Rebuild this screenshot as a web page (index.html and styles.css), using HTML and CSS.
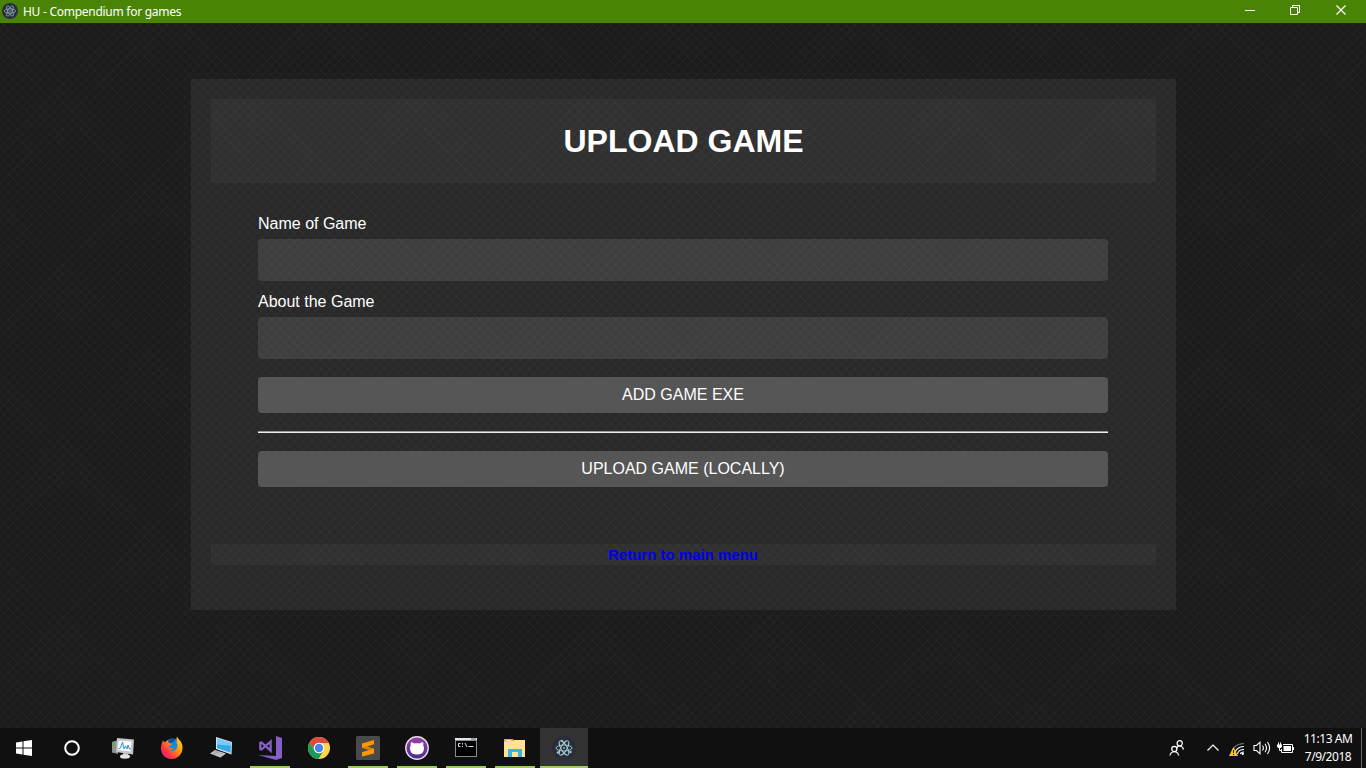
FILE: index.html
```html
<!DOCTYPE html>
<html lang="en">
<head>
<meta charset="utf-8">
<title>HU - Compendium for games</title>
<link rel="stylesheet" href="styles.css">
</head>
<body>
<header class="titlebar">
  <svg class="app-icon" viewBox="0 0 24 24"><circle cx="12" cy="12" r="12" fill="#2b2e3a"/><g fill="none" stroke="#a6cfda" stroke-width="1.1" opacity=".8"><ellipse cx="12" cy="12" rx="8.600" ry="3.300" transform="rotate(0 12 12)"/><ellipse cx="12" cy="12" rx="8.600" ry="3.300" transform="rotate(60 12 12)"/><ellipse cx="12" cy="12" rx="8.600" ry="3.300" transform="rotate(120 12 12)"/></g><circle cx="12" cy="12" r="1" fill="#a6cfda"/></svg>
  <span class="window-title">HU - Compendium for games</span>
  <div class="window-controls">
    <svg viewBox="0 0 46 23"><path d="M10 10.500h10" stroke="#fff"/></svg>
    <svg viewBox="0 0 46 23"><path d="M9.500 7.500h7v7h-7zM11.500 7.500v-2h7v7h-2" fill="none" stroke="#fff"/></svg>
    <svg viewBox="0 0 46 23"><path d="M9.500 5.500l9 9m0-9l-9 9" stroke="#fff" stroke-width="1.200"/></svg>
  </div>
</header>
<main class="stage">
  <section class="panel">
    <div class="panel-head"><h1>UPLOAD GAME</h1></div>
    <form class="form">
      <label for="name">Name of Game</label>
      <input id="name" type="text">
      <label for="about">About the Game</label>
      <input id="about" type="text">
      <button type="button">ADD GAME EXE</button>
      <hr>
      <button type="button">UPLOAD GAME (LOCALLY)</button>
    </form>
    <div class="panel-foot"><a href="#">Return to main menu</a></div>
  </section>
</main>
<footer class="taskbar">
  <div class="apps">
    <div class="app"><svg viewBox="0 0 24 24"><path fill="#fff" d="M4 6.400l6.500-.9v6H4zM11.500 5.300l8.500-1.200v7.400h-8.500zM4 12.500h6.500v6L4 17.600zM11.500 12.500H20v7.500l-8.500-1.300z"/></svg></div>
    <div class="app cortana"><svg viewBox="0 0 24 24"><circle cx="12" cy="12" r="6.800" fill="none" stroke="#fff" stroke-width="2"/></svg></div>
    <div class="app"><svg viewBox="0 0 24 24"><path fill="#8f9191" d="M1 6l6-2v14l-6-1.500z"/><path fill="#55b04a" d="M1 7h1.500v3H1z"/><path fill="#c4c6c6" d="M6 2l17 1.500-1 15L5 16z"/><path fill="#f6fbff" d="M7.500 4.500l13 1-.8 10-13-1.500z"/><path fill="none" stroke="#3391cf" stroke-width="1" d="M7.500 13l2-1 2-6 1.500 7 1.500-3 1.500 3 1-4 1.500 4h1.500"/><path fill="#b7b9b9" d="M12 17h5v3h-5z"/><ellipse cx="14" cy="20.500" rx="5" ry="2.200" fill="#e2e3e3"/></svg></div>
    <div class="app"><svg viewBox="0 0 24 24">
      <defs><linearGradient id="fx" x1="1" y1="0" x2="0" y2="1"><stop offset="0" stop-color="#ffe32b"/><stop offset=".4" stop-color="#ff980e"/><stop offset=".7" stop-color="#ff3647"/><stop offset="1" stop-color="#d31785"/></linearGradient></defs>
      <circle cx="12.500" cy="11" r="8.500" fill="#1689dd"/><path fill="url(#fx)" d="M3 4.500l2 2c1-1.500 2-2 3.500-2.500-.6 1.500-.3 2.500.5 3.300l3 .4c-.2 1.200-1.200 1.500-2.500 2.100-1 .6 0 2 1.200 2.200 1.300.1 2.300-.7 3.300-.2-1 2-3 2.500-5 1.800 2.500 2.800 8 1.200 8.400-3.500.2-2.300-.9-3.600-2.100-4.300 1 .1 1.600.5 2.200 1-.8-2-1.500-3.800-.5-6.300 1 2.500 3.900 4.100 5 7.500 2.300 8-3 15-10.500 15C4.500 23 1 17.700 1 12c0-3 1-5 2-7.500z"/><path fill="#174b9e" d="M8.500 3.500c2-1 5-1.500 7 .5l-2 2-4 1c-1-1-1.200-2-1-3.500z"/></svg></div>
    <div class="app"><svg viewBox="0 0 24 24"><path fill="#d7e5ee" d="M7 1l16 5-.5 12.500L7 13z"/><path fill="#36a9ee" d="M8 2.500l14 4.300-.5 10L8 12z"/><path fill="#72cdff" d="M8 2.500l14 4.300-.1 3L8 8.500z"/><path fill="#ccd0d2" d="M6 14l11 3.500-5.500 4L1 17.500z"/><path d="M5 15l9 3.200M3.500 16.500l9 3.200M9 15.500l-5 3" stroke="#85898b" stroke-width=".6"/></svg></div>
    <div class="app open"><svg viewBox="0 0 24 24"><path fill="#865fc5" d="M18 0l6 2v20l-6 2-18-5 18 1z"/><path fill="none" stroke="#865fc5" stroke-width="2.300" d="M2.300 6.800v6.400l1.200.3L12.600 5.500v9.200L3.500 6.500z"/></svg></div>
    <div class="app"><svg viewBox="0 0 24 24"><circle cx="12" cy="12" r="11" fill="#fdd44b"/><path fill="#dd4b3e" d="M2.500 6.500A11 11 0 0 1 21.700 7H12a5 5 0 0 0-4.500 7z"/><path fill="#179b59" d="M2.500 6.500A11 11 0 0 0 11.500 23l5-8.500A5 5 0 0 1 7.700 14.500z"/><circle cx="12" cy="12" r="5.300" fill="#fff"/><circle cx="12" cy="12" r="4.200" fill="#4584ed"/></svg></div>
    <div class="app open"><svg viewBox="0 0 24 24"><rect width="24" height="24" rx="1.500" fill="#4a4a4a"/><path fill="#ff9800" d="M18 4v4.200l-7 2.300 7 2.300v4.700L6 20.500v-4.200l7-2.300-7-2.300V7.500z"/><path fill="#d9790a" d="M6 11.500l5-1 7 2.300-5 1.400z"/></svg></div>
    <div class="app open"><svg viewBox="0 0 24 24"><defs><linearGradient id="gh" x2="0" y2="1"><stop stop-color="#9b3dab"/><stop offset="1" stop-color="#482f8c"/></linearGradient></defs><circle cx="12" cy="12" r="11.200" fill="url(#gh)" stroke="#e4dce9" stroke-width="1.400"/><path fill="#fff" d="M6 6.300c1.500 0 2.500.7 3.500 1.300 1.500-.4 3.500-.4 5 0 1-.6 2-1.300 3.500-1.300.5 1.200.5 2.300.2 3.200 1 1.500 1 3.500.3 5.500-1 2.700-3 3.400-6.500 3.400S6.500 17.700 5.500 15c-.7-2-.7-4 .3-5.500-.3-.9-.3-2 .2-3.200z"/></svg></div>
    <div class="app open"><svg viewBox="0 0 24 24"><path fill="#858b8f" d="M1 2h22v19H1z"/><path fill="#000" d="M2 5h20v15H2z"/><path fill="#dfe5e8" d="M1 2h22v2H1z"/><path stroke="#54636e" d="M17 3h5"/><path fill="none" stroke="#ddd" d="M6.500 7.500h-2v3h2M8.500 7v1.500M8.500 10v1M11 7l2 4M14.500 10.500h5"/></svg></div>
    <div class="app open"><svg viewBox="0 0 24 24"><path fill="#e9aa20" d="M1 3h9l1 2v4H1z"/><path fill="#ffe391" d="M1 5.500l9-.5 1-1h11v17H1z"/><path fill="#39b4e8" d="M5 13h14v8h-4v-5H9v5H5z"/><path fill="#fff6cc" d="M3 4h5v1H3z"/></svg></div>
    <div class="app open active"><svg viewBox="0 0 24 24"><circle cx="12" cy="12" r="12" fill="#2b2e3a"/><g fill="none" stroke="#a6cfd8" stroke-width=".9"><ellipse cx="12" cy="12" rx="8" ry="3" transform="rotate(0 12 12)"/><ellipse cx="12" cy="12" rx="8" ry="3" transform="rotate(60 12 12)"/><ellipse cx="12" cy="12" rx="8" ry="3" transform="rotate(120 12 12)"/></g><g fill="#a6cfd8"><circle cx="12" cy="12" r=".9"/><circle cx="6" cy="16.500" r="1.200"/><circle cx="18.500" cy="16" r="1.200"/><circle cx="10" cy="4.800" r="1"/></g></svg></div>
  </div>
  <div class="tray">
    <svg class="people" viewBox="0 0 16 16"><g fill="none" stroke="#fff" stroke-width="1.200"><circle cx="10.700" cy="3.200" r="2.600"/><path d="M7.500 8.500C8.500 5 13.500 5 14.500 9.500"/><circle cx="5.300" cy="9" r="2.600"/><path d="M1 15.500c.8-5 7.800-5 8.600 0"/></g></svg>
    <svg class="chevron" viewBox="0 0 12 8"><path d="M.5 6.500L6 1l5.500 5.500" fill="none" stroke="#fff" stroke-width="1.200"/></svg>
    <svg class="wifi" viewBox="0 0 16 16"><g fill="none" stroke-width="1.100"><path d="M2.500 12.500C3 7 8 2.500 15 2.500" stroke="#777"/><path d="M5.500 13C6 9 9.500 5.500 15 5.500M8.500 13c.5-2.500 3-4.500 6.500-4.500M11.500 13c0-1 1.500-2 3.500-2" stroke="#fff"/></g><circle cx="13.700" cy="12.800" r="1.200" fill="#fff"/><path d="M4.500 6L9 15H0z" fill="#fcc21b"/><path d="M4.500 9v3m0 1v1" stroke="#222"/></svg>
    <svg class="sound" viewBox="0 0 18 16"><g fill="none" stroke="#fff" stroke-width="1.100"><path d="M1 5.500h2.500L7 2.200v11.600L3.500 10.500H1z"/><path d="M9.500 5.500q1.800 2.500 0 5M12 3.700q3 4.300 0 8.600M14.500 2q4.200 6 0 12"/></g></svg>
    <svg class="battery" viewBox="0 0 17 14"><path d="M6 2.500h9.500v8h-11V7" fill="none" stroke="#fff"/><path fill="#fff" d="M6.500 4h7.500v5H6.500zM16 5h1v3h-1zM0 2.500h5v2L4 6H1L0 4.500z"/><path d="M1.500 .5v3M3.500 .5v3M2.500 6v2.500h2" fill="none" stroke="#fff"/></svg>
    <div class="clock"><span>11:13 AM</span><span>7/9/2018</span></div>
    <div class="desktop-peek"></div>
  </div>
</footer>
</body>
</html>
```

FILE: styles.css
```css
* { box-sizing: border-box; }
body {
  margin: 0;
  height: 768px;
  display: flex;
  flex-direction: column;
  overflow: hidden;
  background: #1c1c1c;
  color: #fff;
  font-family: "Liberation Sans", Arial, sans-serif;
}
svg { display: block; }
.titlebar {
  height: 23px;
  flex: none;
  display: flex;
  background: #4a8407;
  font: 12px/23px "Noto Sans", sans-serif;
}
.app-icon { width: 16px; height: 16px; margin: 3px 5px 0 2px; }
.window-title { letter-spacing: -0.27px; }
.window-controls { display: flex; margin-left: auto; }
.window-controls svg { width: 46px; height: 23px; }
.window-controls svg:last-child { margin-right: -7px; }
.stage {
  flex: 1;
  padding: 56px 190px 0 191px;
  background:
    repeating-linear-gradient(45deg, rgba(255,255,255,.018) 0 1.2px, transparent 1.8px 6.4px),
    repeating-linear-gradient(-45deg, rgba(255,255,255,.018) 0 1.2px, transparent 1.8px 6.4px),
    #1c1c1c;
}
.panel {
  height: 531px;
  padding: 20px;
  background: rgba(255,255,255,.06);
}
.panel-head {
  height: 84px;
  background: rgba(255,255,255,.035);
  text-align: center;
}
h1 { margin: 0; font-size: 32px; line-height: 84px; }
.form {
  display: flex;
  flex-direction: column;
  margin: 31px 48px 0 47px;
}
label { font-size: 16px; line-height: 20px; margin-bottom: 5px; }
input {
  height: 42px;
  margin: 0 0 11px;
  border: 0;
  border-radius: 4px;
  background: rgba(255,255,255,.1);
}
button {
  height: 36px;
  padding: 0;
  border: 0;
  border-radius: 4px;
  background: #565656;
  color: #fff;
  font: 16px "Liberation Sans", Arial, sans-serif;
}
#about { margin-bottom: 18px; }
hr {
  width: 100%;
  height: 2px;
  margin: 18px 0;
  border: 0;
  border-top: 1px solid #9a9a9a;
  background: #eee;
}
.panel-foot {
  height: 21px;
  margin-top: 57px;
  padding-right: 1px;
  background: rgba(255,255,255,.035);
  text-align: center;
  font-size: 15px;
  font-weight: bold;
  line-height: 21px;
}
.panel-foot a { color: #00e; text-decoration: none; }
.taskbar {
  height: 40px;
  flex: none;
  display: flex;
  justify-content: space-between;
  background: #101010;
}
.apps { display: flex; gap: 1px; }
.app {
  width: 48px;
  height: 40px;
  display: flex;
  justify-content: center;
  padding-top: 8px;
}
.app svg { width: 24px; height: 24px; }
.cortana { margin: 0 2px 0 -1px; }
.open { background: linear-gradient(#9bcb62, #9bcb62) center bottom / 40px 2px no-repeat; }
.active { background: linear-gradient(#9bcb62, #9bcb62) center bottom / 48px 2px no-repeat #333; }
.tray { display: flex; align-items: flex-start; }
.people { width: 16px; height: 16px; margin: 12px 22px 0 0; }
.chevron { width: 12px; height: 8px; margin: 16px 10px 0 0; }
.wifi { width: 16px; height: 16px; margin: 13px 8px 0 0; }
.sound { width: 18px; height: 16px; margin: 12px 6px 0 0; }
.battery { width: 17px; height: 14px; margin: 14px 9px 0 0; }
.clock {
  width: 50px;
  display: flex;
  flex-direction: column;
  align-items: center;
  padding-top: 2px;
  font: 12px/18px "Noto Sans", sans-serif;
  letter-spacing: -0.45px;
  white-space: nowrap;
}
.desktop-peek { width: 5px; height: 40px; margin-left: 8px; border-left: 1px solid #666; }
```
